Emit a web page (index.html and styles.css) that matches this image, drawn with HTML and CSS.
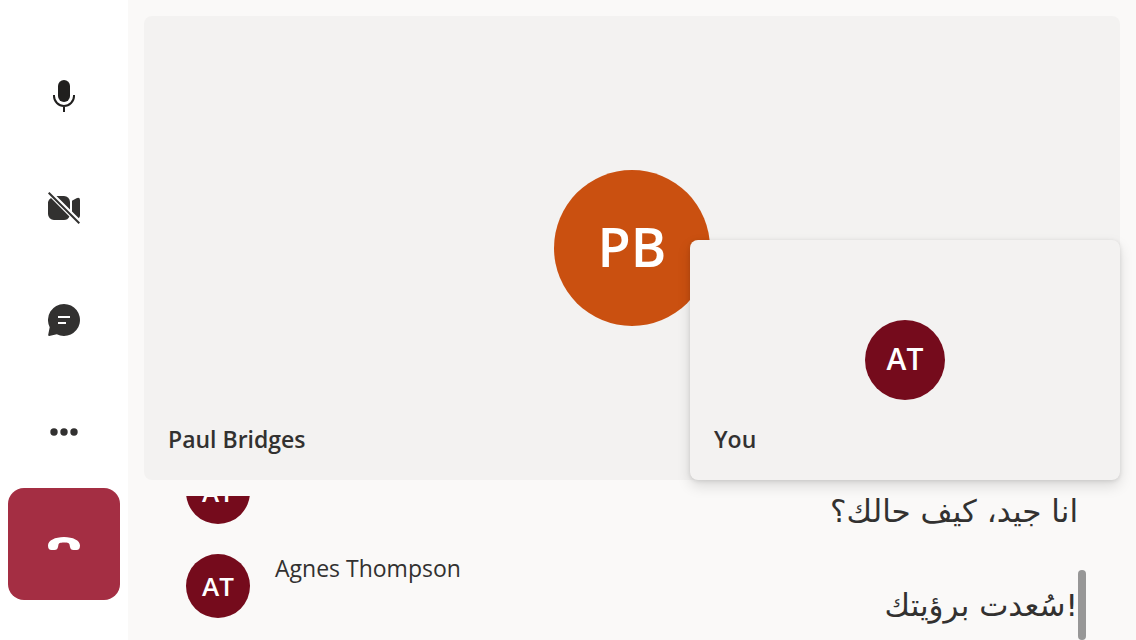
FILE: index.html
```html
<!DOCTYPE html>
<html lang="en">
<head>
<meta charset="utf-8">
<title>Call</title>
<link rel="stylesheet" href="styles.css">
</head>
<body>
<div class="call">
  <nav class="controls" aria-label="Call controls">
    <button class="control control-mic" type="button" aria-label="Mute">
      <svg class="icon" viewBox="0 0 32 32" aria-hidden="true"><rect x="10" y="0" width="12" height="22" rx="6" fill="currentColor"/><path d="M6 15v1a10 10 0 0 0 20 0v-1M16 26v6" fill="none" stroke="currentColor" stroke-width="2"/></svg>
    </button>
    <button class="control" type="button" aria-label="Turn camera on">
      <svg class="icon" viewBox="0 0 32 32" aria-hidden="true"><path d="M3 6 21.400 24.400A6 6 0 0 1 16 28H6a6 6 0 0 1-6-6V10a6 6 0 0 1 3-4ZM8.500 4H16a6 6 0 0 1 6 6v7.500ZM24 8.800 28.500 6.200Q32 5 32 8V23.500Q32 25.200 30.800 26.200L24 19.500Z" fill="currentColor"/><path d="M.7.700 31.300 31.300" stroke="currentColor" stroke-width="2"/></svg>
    </button>
    <button class="control" type="button" aria-label="Chat">
      <svg class="icon" viewBox="0 0 32 32" aria-hidden="true"><path d="M16 0a16 16 0 1 1-7.200 30.300L1.200 32Q0 32 .2 30.800L1.700 23.200A16 16 0 0 1 16 0Z" fill="currentColor"/><path d="M10 13h12M10 19h8" stroke="#fff" stroke-width="2"/></svg>
    </button>
    <button class="control" type="button" aria-label="More options">
      <svg class="icon" viewBox="0 0 32 32" aria-hidden="true"><g fill="currentColor"><circle cx="6" cy="16" r="3.700"/><circle cx="16" cy="16" r="3.700"/><circle cx="26" cy="16" r="3.700"/></g></svg>
    </button>
    <button class="control control-end" type="button" aria-label="Leave call">
      <svg class="icon" viewBox="0 0 32 32" aria-hidden="true"><path d="M16 9C25 9 32 12.500 32 17.500C32 20.800 30.800 22 28.500 22H25.500C23.200 22 22.500 21 22 19L21.500 16.500C21.200 15.200 20 14.500 16 14.500S10.800 15.200 10.500 16.500L10 19C9.500 21 8.800 22 6.500 22H3.500C1.200 22 0 20.800 0 17.500C0 12.500 7 9 16 9Z" fill="currentColor"/></svg>
    </button>
  </nav>
  <main class="stage">
    <section class="tile tile-remote" aria-label="Paul Bridges">
      <div class="avatar avatar-large">PB</div>
      <div class="tile-name">Paul Bridges</div>
      <section class="tile tile-self" aria-label="You">
        <div class="avatar avatar-medium">AT</div>
        <div class="tile-name">You</div>
      </section>
    </section>
    <section class="captions" aria-label="Captions">
      <article class="caption">
        <div class="avatar avatar-small">AT</div>
        <div class="caption-body">
          <p class="caption-text" lang="ar">انا جيد، كيف حالك؟</p>
        </div>
      </article>
      <article class="caption">
        <div class="avatar avatar-small">AT</div>
        <div class="caption-body">
          <div class="caption-name">Agnes Thompson</div>
          <p class="caption-text" lang="ar">سُعدت برؤيتك!</p>
        </div>
      </article>
      <div class="scroll-thumb"></div>
    </section>
  </main>
</div>
</body>
</html>
```
FILE: styles.css
```css
* {
  box-sizing: border-box;
}

body {
  margin: 0;
  background: #faf9f8;
  color: #323130;
  font-family: "Open Sans", "Noto Sans", sans-serif;
}

.call {
  display: flex;
  height: 100vh;
}

.controls {
  display: flex;
  flex-direction: column;
  flex: none;
  width: 128px;
  padding: 40px 8px;
  background: #fff;
}

.control {
  display: flex;
  align-items: center;
  justify-content: center;
  height: 112px;
  padding: 0;
  border: 0;
  border-radius: 16px;
  background: transparent;
  color: #323130;
}

.control-mic {
  color: #201f1e;
}

.control-end {
  background: #a42e43;
  color: #fff;
}

.icon {
  width: 32px;
  height: 32px;
}

.stage {
  display: flex;
  flex-direction: column;
  flex: 1;
  gap: 16px;
  min-width: 0;
  padding: 16px 16px 0;
}

.tile {
  display: flex;
  align-items: center;
  justify-content: center;
  border-radius: 8px;
  background: #f3f2f1;
}

.tile-remote {
  position: relative;
  flex: 1;
}

.tile-self {
  position: absolute;
  right: 0;
  bottom: 0;
  width: 430px;
  height: 240px;
  box-shadow: 0 6px 14px rgba(0, 0, 0, 0.13), 0 1px 4px rgba(0, 0, 0, 0.11);
}

.tile-name {
  position: absolute;
  bottom: 25px;
  left: 24px;
  font-size: 23px;
  font-weight: 550;
  line-height: 32px;
}

.avatar {
  display: flex;
  align-items: center;
  justify-content: center;
  flex: none;
  border-radius: 50%;
  background: #750b1c;
  color: #fff;
  font-weight: 600;
}

.avatar-large {
  width: 156px;
  height: 156px;
  padding-bottom: 4px;
  background: #ca5010;
  font-size: 54px;
}

.avatar-medium {
  width: 80px;
  height: 80px;
  padding-bottom: 4px;
  font-size: 30px;
}

.avatar-small {
  width: 64px;
  height: 64px;
  margin-top: 2px;
  font-size: 26px;
}

.captions {
  position: relative;
  display: flex;
  flex-direction: column;
  justify-content: flex-end;
  flex: none;
  gap: 20px;
  height: 144px;
  padding: 0 42px 14px;
  overflow: hidden;
}

.caption {
  display: flex;
  flex: none;
  gap: 25px;
  min-height: 74px;
}

.caption-body {
  flex: 1;
  align-self: flex-end;
}

.caption-name {
  font-size: 23px;
  line-height: 32px;
}

.caption-text {
  margin: 0;
  font-family: "DejaVu Sans", sans-serif;
  font-size: 31px;
  line-height: 42px;
  text-align: right;
}

.scroll-thumb {
  position: absolute;
  right: 34px;
  bottom: 0;
  width: 8px;
  height: 70px;
  border-radius: 4px;
  background: #979797;
}
```
